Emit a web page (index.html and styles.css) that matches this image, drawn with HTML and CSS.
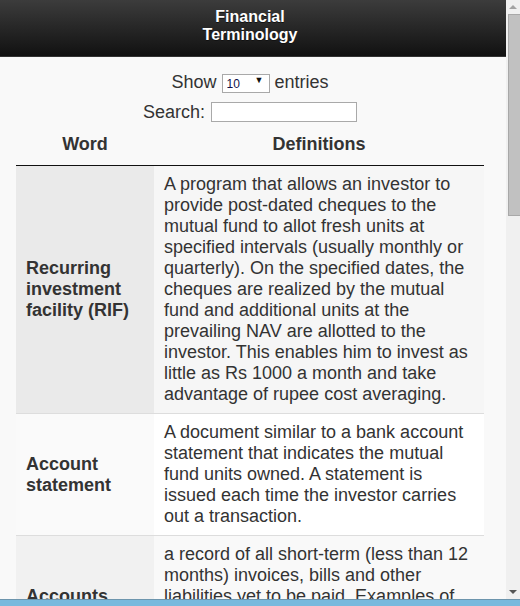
FILE: index.html
```html
<!DOCTYPE html>
<html>
<head>
<meta charset="utf-8">
<title>Financial Terminology</title>
<link rel="stylesheet" href="styles.css">
</head>
<body>
<div class="screen">
  <div class="viewport">
    <header class="bar">
      <h1 class="title">Financial<br>Terminology</h1>
    </header>
    <main class="content">
      <div class="controls">
        <div class="length">Show <span class="select-wrap"><select class="select"><option>10</option><option>25</option><option>50</option></select></span> entries</div>
        <div class="filter"><label>Search: <input class="search" type="search"></label></div>
      </div>
      <table class="glossary">
        <colgroup><col class="c-word"><col class="c-def"></colgroup>
        <thead>
          <tr><th>Word</th><th>Definitions</th></tr>
        </thead>
        <tbody>
          <tr class="odd hover"><td class="word">Recurring investment facility (RIF)</td><td>A program that allows an investor to provide post-dated cheques to the mutual fund to allot fresh units at specified intervals (usually monthly or quarterly). On the specified dates, the cheques are realized by the mutual fund and additional units at the prevailing NAV are allotted to the investor. This enables him to invest as little as Rs 1000 a month and take advantage of rupee cost averaging.</td></tr>
          <tr class="even"><td class="word">Account statement</td><td>A document similar to a bank account statement that indicates the mutual fund units owned. A statement is issued each time the investor carries out a transaction.</td></tr>
          <tr class="odd"><td class="word">Accounts payable</td><td>a record of all short-term (less than 12 months) invoices, bills and other liabilities yet to be paid. Examples of accounts payable include utility bills, supplier invoices, credit card bills and short-term loan repayments.</td></tr>
          <tr class="even"><td class="word">Accounts receivable</td><td>Money owed to a business by its customers for goods or services that have been delivered but not yet paid for.</td></tr>
          <tr class="odd"><td class="word">Accrued interest</td><td>Interest that has been earned on a bond since the last coupon payment date but has not yet been paid out.</td></tr>
        </tbody>
      </table>
    </main>
  </div>
  <div class="scrollbar" aria-hidden="true">
    <span class="arrow up"></span>
    <span class="track"><span class="thumb"></span></span>
    <span class="arrow down"></span>
  </div>
</div>
<div class="taskbar"></div>
</body>
</html>
```

FILE: styles.css
```css
html, body {
  margin: 0;
  padding: 0;
  height: 606px;
  overflow: hidden;
}
body {
  display: flex;
  flex-direction: column;
  font-family: "Liberation Sans", Arial, sans-serif;
  font-size: 18px;
  line-height: 21px;
  color: #333;
  background: #f9f9f9;
}
.screen {
  display: flex;
  height: 599px;
  flex: none;
}
.viewport {
  flex: 1;
  min-width: 0;
  overflow: hidden;
  background: #f9f9f9;
}
.scrollbar {
  width: 14px;
  flex: none;
  background: #f0f0f0;
  display: flex;
  flex-direction: column;
}
.arrow {
  height: 14px;
  flex: none;
  display: flex;
  align-items: center;
  justify-content: center;
}
.arrow::before {
  content: "";
  width: 0;
  height: 0;
  border-left: 4px solid transparent;
  border-right: 4px solid transparent;
}
.arrow.up::before {
  border-bottom: 4px solid #a3a3a3;
}
.arrow.down::before {
  border-top: 4px solid #555;
}
.track {
  flex: 1;
  display: flex;
  flex-direction: column;
  padding-left: 2px;
}
.thumb {
  height: 200px;
  background: #c1c1c1;
  border: 1px solid #a8a8a8;
  border-right: 0;
}
.bar {
  box-sizing: border-box;
  background: linear-gradient(#3c3c3c, #111);
  border-bottom: 1px solid #333;
  height: 57px;
  padding: 0 6px 4px 0;
  display: flex;
  align-items: center;
  justify-content: center;
}
.title {
  margin: 0;
  font-size: 16px;
  line-height: 18px;
  font-weight: bold;
  color: #fff;
  text-align: center;
  text-shadow: 0 1px 0 #111;
}
.content {
  padding: 14px 22px 30px 16px;
}
.controls {
  text-align: center;
}
.length {
  height: 22px;
  line-height: 22px;
}
.select-wrap {
  position: relative;
  display: inline-block;
  vertical-align: middle;
  margin-top: -3px;
}
.select-wrap::after {
  content: "\25BC";
  position: absolute;
  right: 6px;
  top: 5px;
  font-size: 9px;
  line-height: 9px;
  color: #111;
  pointer-events: none;
}
.select {
  -webkit-appearance: none;
  appearance: none;
  width: 48px;
  height: 19px;
  border: 1px solid #a9a9a9;
  border-radius: 0;
  background: #fff;
  font-family: "Liberation Sans", Arial, sans-serif;
  font-size: 12px;
  color: #10104a;
  padding: 0 0 0 4px;
  margin: 0;
}
.filter {
  margin-top: 8px;
  height: 22px;
  line-height: 22px;
}
.search {
  -webkit-appearance: none;
  appearance: none;
  width: 146px;
  height: 20px;
  box-sizing: border-box;
  border: 1px solid #a9a9a9;
  background: #fff;
  margin: -3px 0 0 1px;
  padding: 0 3px;
  vertical-align: middle;
  font-size: 13px;
}
.glossary {
  width: 468px;
  table-layout: fixed;
  border-collapse: collapse;
  margin-top: 1px;
}
.c-word { width: 138px; }
.c-def { width: 330px; }
.glossary th {
  font-weight: bold;
  padding: 10px 18px;
  border-bottom: 1px solid #111;
  text-align: center;
}
.glossary td {
  padding: 8px 10px;
  border-top: 1px solid #ddd;
  vertical-align: middle;
}
.glossary tbody tr:first-child td {
  border-top: 0;
}
.glossary td.word {
  font-weight: bold;
}
.glossary tr.odd td { background: #f9f9f9; }
.glossary tr.odd td.word { background: #f1f1f1; }
.glossary tr.even td { background: #fff; }
.glossary tr.even td.word { background: #fafafa; }
.glossary tr.hover td { background: #f6f6f6; }
.glossary tr.hover td.word { background: #eaeaea; }
.taskbar {
  flex: none;
  height: 6px;
  border-top: 1px solid #6d95ad;
  background: #79b9dd;
}
```
